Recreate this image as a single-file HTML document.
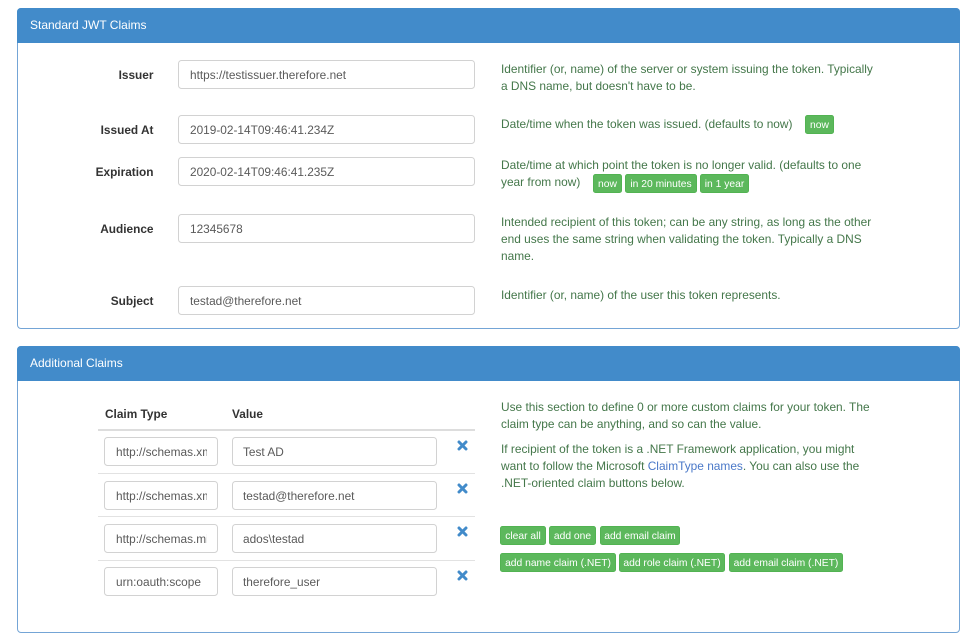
<!DOCTYPE html>
<html><head><meta charset="utf-8">
<style>
html,body{margin:0;padding:0;background:#fff;width:975px;height:641px;overflow:hidden}
body{font-family:"Liberation Sans",Arial,sans-serif;font-size:11.85px;color:#333;position:relative}
.panel{position:absolute;left:17px;width:941px;border:1px solid #74a5d6;border-radius:4px;box-sizing:content-box}
.head{position:absolute;left:-1px;right:-1px;top:-1px;height:35px;background:#428bca;border-radius:4px 4px 0 0;color:#fff;font-size:12px;line-height:35px;padding-left:13px;box-sizing:border-box}
.a{position:absolute;white-space:nowrap}
.lb{position:absolute;left:0;width:153.5px;text-align:right;font-weight:bold;line-height:17px}
.in{position:absolute;box-sizing:border-box;height:29px;background:#fff;border:1px solid #d2d2d2;border-radius:3.5px;color:#5a5a5a;line-height:29px;padding:0 10px 0 11px;white-space:nowrap}
.in span{display:block;overflow:hidden;height:27px}
.v{left:178px;width:297px}
.t{left:104px;width:114px}
.u{left:232px;width:205px;padding-left:10px}
.h{position:absolute;left:501px;color:#44774a;font-size:11.9px;line-height:17px;white-space:nowrap}
.b{position:absolute;height:19px;box-sizing:border-box;background:#5cb85c;border:1px solid #52b352;border-radius:2.5px;color:#fff;font-size:10.3px;line-height:19px;text-align:center;white-space:nowrap}
.hr{position:absolute;left:98px;width:377px;height:1px;background:#e2e2e2}
.x{position:absolute;left:457px;width:11px;height:11px}
a{color:#4a78c8;text-decoration:none}
</style></head><body>
<div class="panel" style="top:8px;height:319px"><div class="head">Standard JWT Claims</div></div>
<div class="lb" style="top:67px">Issuer</div>
<div class="in v" style="top:60px"><span>https://testissuer.therefore.net</span></div>
<div class="h" style="top:61px">Identifier (or, name) of the server or system issuing the token. Typically<br>a DNS name, but doesn't have to be.</div>

<div class="lb" style="top:122px">Issued At</div>
<div class="in v" style="top:115px"><span>2019-02-14T09:46:41.234Z</span></div>
<div class="h" style="top:116px">Date/time when the token was issued. (defaults to now)</div>
<div class="b" style="left:805px;top:115px;width:29px">now</div>

<div class="lb" style="top:164px">Expiration</div>
<div class="in v" style="top:157px"><span>2020-02-14T09:46:41.235Z</span></div>
<div class="h" style="top:157px">Date/time at which point the token is no longer valid. (defaults to one<br>year from now)</div>
<div class="b" style="left:593px;top:174px;width:29px">now</div>
<div class="b" style="left:625px;top:174px;width:72px">in 20 minutes</div>
<div class="b" style="left:700px;top:174px;width:49px">in 1 year</div>

<div class="lb" style="top:221px">Audience</div>
<div class="in v" style="top:214px"><span>12345678</span></div>
<div class="h" style="top:214px">Intended recipient of this token; can be any string, as long as the other<br>end uses the same string when validating the token. Typically a DNS<br>name.</div>

<div class="lb" style="top:293px">Subject</div>
<div class="in v" style="top:286px"><span>testad@therefore.net</span></div>
<div class="h" style="top:287px">Identifier (or, name) of the user this token represents.</div>

<div class="panel" style="top:346px;height:285px"><div class="head">Additional Claims</div></div>
<div class="a" style="left:105px;top:406px;font-weight:bold;line-height:17px">Claim Type</div>
<div class="a" style="left:232px;top:406px;font-weight:bold;line-height:17px">Value</div>
<div class="hr" style="top:429px;height:2px;background:#ddd"></div>
<div class="hr" style="top:473px"></div>
<div class="hr" style="top:516px"></div>
<div class="hr" style="top:560px"></div>

<div class="in t" style="top:437px"><span>http://schemas.xmlsoap.org</span></div>
<div class="in u" style="top:437px"><span>Test AD</span></div>
<div class="in t" style="top:481px"><span>http://schemas.xmlsoap.org</span></div>
<div class="in u" style="top:481px"><span>testad@therefore.net</span></div>
<div class="in t" style="top:524px"><span>http://schemas.microsoft.com</span></div>
<div class="in u" style="top:524px"><span>ados\testad</span></div>
<div class="in t" style="top:567px"><span>urn:oauth:scope</span></div>
<div class="in u" style="top:567px"><span>therefore_user</span></div>

<svg class="x" style="top:439.5px" viewBox="0 0 11 11"><path d="M2 2L9 9M9 2L2 9" stroke="#428bca" stroke-width="3" stroke-linecap="round"/></svg>
<svg class="x" style="top:482.5px" viewBox="0 0 11 11"><path d="M2 2L9 9M9 2L2 9" stroke="#428bca" stroke-width="3" stroke-linecap="round"/></svg>
<svg class="x" style="top:525.5px" viewBox="0 0 11 11"><path d="M2 2L9 9M9 2L2 9" stroke="#428bca" stroke-width="3" stroke-linecap="round"/></svg>
<svg class="x" style="top:569.5px" viewBox="0 0 11 11"><path d="M2 2L9 9M9 2L2 9" stroke="#428bca" stroke-width="3" stroke-linecap="round"/></svg>

<div class="h" style="top:399px">Use this section to define 0 or more custom claims for your token. The<br>claim type can be anything, and so can the value.</div>
<div class="h" style="top:441px">If recipient of the token is a .NET Framework application, you might<br>want to follow the Microsoft <a>ClaimType names</a>. You can also use the<br>.NET-oriented claim buttons below.</div>

<div class="b" style="left:500px;top:526px;width:46px">clear all</div>
<div class="b" style="left:549px;top:526px;width:47px">add one</div>
<div class="b" style="left:600px;top:526px;width:80px">add email claim</div>
<div class="b" style="left:500px;top:553px;width:116px">add name claim (.NET)</div>
<div class="b" style="left:619px;top:553px;width:106px">add role claim (.NET)</div>
<div class="b" style="left:729px;top:553px;width:114px">add email claim (.NET)</div>
</body></html>
